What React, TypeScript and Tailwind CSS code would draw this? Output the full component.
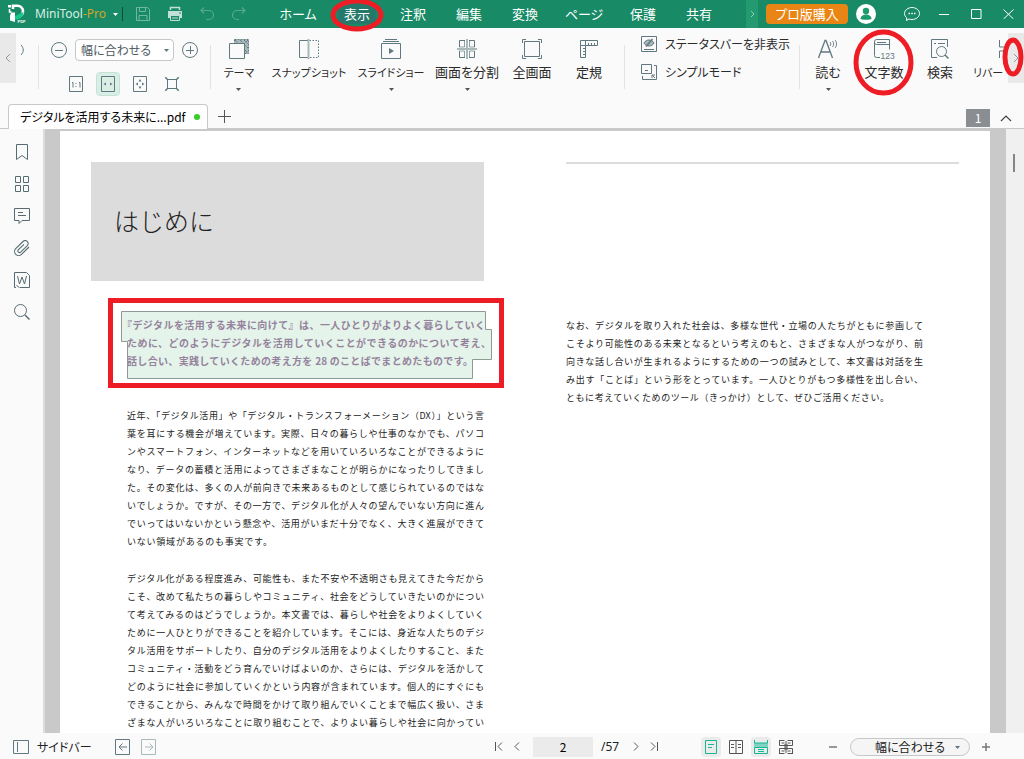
import type { ReactNode } from 'react'

const MENUS = [
  { label: 'ホーム', wide: true },
  { label: '表示', active: true },
  { label: '注釈' },
  { label: '編集' },
  { label: '変換' },
  { label: 'ページ', wide: true },
  { label: '保護' },
  { label: '共有' },
]

const LEFT_FIRST = [
  '近年、「デジタル活用」や「デジタル・トランスフォーメーション（DX）」という言',
  '葉を耳にする機会が増えています。実際、日々の暮らしや仕事のなかでも、パソコ',
  'ンやスマートフォン、インターネットなどを用いていろいろなことができるように',
  'なり、データの蓄積と活用によってさまざまなことが明らかになったりしてきまし',
  'た。その変化は、多くの人が前向きで未来あるものとして感じられているのではな',
  'いでしょうか。ですが、その一方で、デジタル化が人々の望んでいない方向に進ん',
  'でいってはいないかという懸念や、活用がいまだ十分でなく、大きく進展ができて',
  'いない領域があるのも事実です。',
]

const LEFT_SECOND = [
  'デジタル化がある程度進み、可能性も、また不安や不透明さも見えてきた今だから',
  'こそ、改めて私たちの暮らしやコミュニティ、社会をどうしていきたいのかについ',
  'て考えてみるのはどうでしょうか。本文書では、暮らしや社会をよりよくしていく',
  'ために一人ひとりができることを紹介しています。そこには、身近な人たちのデジ',
  'タル活用をサポートしたり、自分のデジタル活用をよりよくしたりすること、また',
  'コミュニティ・活動をどう育んでいけばよいのか、さらには、デジタルを活かして',
  'どのように社会に参加していくかという内容が含まれています。個人的にすぐにも',
  'できることから、みんなで時間をかけて取り組んでいくことまで幅広く扱い、さま',
  'ざまな人がいろいろなことに取り組むことで、よりよい暮らしや社会に向かってい',
]

const RIGHT_TEXT = [
  'なお、デジタルを取り入れた社会は、多様な世代・立場の人たちがともに参画して',
  'こそより可能性のある未来となるという考えのもと、さまざまな人がつながり、前',
  '向きな話し合いが生まれるようにするための一つの試みとして、本文書は対話を生',
  'み出す「ことば」という形をとっています。一人ひとりがもつ多様性を出し合い、',
  'ともに考えていくためのツール（きっかけ）として、ぜひご活用ください。',
]

function Svg({ w, h, children, className = '' }: { w: number; h: number; children: ReactNode; className?: string }) {
  return (
    <svg width={w} height={h} viewBox={`0 0 ${w} ${h}`} fill="none" stroke="currentColor" className={`shrink-0 ${className}`} aria-hidden="true">
      {children}
    </svg>
  )
}

function Caret({ className = '' }: { className?: string }) {
  return (
    <Svg w={5} h={3} className={className}>
      <path d="M0 0h5L2.500 3z" fill="currentColor" stroke="none" />
    </Svg>
  )
}

// hand-drawn style marker ring, laid over the control it wraps
function Ring({ className, w, h }: { className: string; w: number; h: number }) {
  return (
    <svg width={w} height={h} className={`absolute z-20 pointer-events-none ${className}`} aria-hidden="true">
      <ellipse cx={w / 2} cy={h / 2} rx={w / 2 - 3} ry={h / 2 - 3} fill="none" stroke="#ee1c25" strokeWidth="5" />
    </svg>
  )
}

function TitleBar() {
  return (
    <header className="h-7 shrink-0 flex items-center bg-[#188a65] text-white">
      <div className="w-[267px] shrink-0 flex items-center pl-2">
        <svg width="20" height="20" viewBox="0 0 20 20" aria-label="MiniTool PDF" role="img">
          <path d="M0 1h3v2.500H0z" fill="#fff" />
          <path d="M1.500 5v3h2" fill="none" stroke="#fff" strokeWidth="1.500" />
          <path d="M5 5V1.800h4.500a5.500 5.500 0 0 1 5.500 5.500c0 2-1 3.500-2.500 4.500" fill="none" stroke="#fff" strokeWidth="2.600" />
          <path d="M3 8.500h4V18l-5-1.500V12z" fill="#fff" />
          <path d="M7 12l8.500-4c0 5-3.500 7.500-8.500 7.500z" fill="#16c98a" />
          <text x="9.500" y="19" fontSize="4" fontWeight="700" fill="#fff" fontFamily="Liberation Sans, sans-serif">PDF</text>
        </svg>
        <span className="ml-[7px] w-[68px] text-[12px] leading-4 whitespace-nowrap font-['Noto_Sans',sans-serif] text-[#d9efe7]">
          MiniTool<span className="text-[#d5a528]">-Pro</span>
        </span>
        <button aria-label="アプリメニュー" className="ml-2.5"><Caret /></button>
        <span className="ml-1 w-px h-3.5 bg-[#0c4a36]" />
        <button aria-label="保存" className="ml-3 text-[#6fb8a1]">
          <Svg w={16} h={16}>
            <path d="M1.500 1.500h11l2 2v11h-13zM4.500 1.500v4h6v-4M4 14.500v-5h8v5" />
          </Svg>
        </button>
        <button aria-label="印刷" className="ml-4 text-[#c3e0d6]">
          <Svg w={16} h={16}>
            <path d="M3.500 4V1.500h9V4" strokeWidth="1.500" />
            <path d="M1 5h14v7H1z" fill="currentColor" stroke="none" />
            <path d="M3.500 9.500h9v5h-9z" fill="#188a65" />
            <path d="M5 12h6" />
            <path d="M12 7h2" stroke="#188a65" />
          </Svg>
        </button>
        <button aria-label="元に戻す" className="ml-4 text-[#57a88e]">
          <Svg w={16} h={16}>
            <path d="M5 1.500L2 4.500l3 3M2 4.500h8a4.500 4.500 0 0 1 0 9H7" strokeWidth="1.200" />
          </Svg>
        </button>
        <button aria-label="やり直す" className="ml-4 text-[#57a88e]">
          <Svg w={16} h={16}>
            <path d="M11 1.500l3 3-3 3M14 4.500H6a4.500 4.500 0 0 0 0 9h2" strokeWidth="1.200" />
          </Svg>
        </button>
      </div>
      <nav className="flex items-center flex-1">
        {MENUS.map(m => (
          <div key={m.label} className={`relative flex justify-center ${m.wide ? 'w-[62px]' : 'w-14'}`}>
            <button className={`h-5 px-1.5 text-[13px] leading-5 whitespace-nowrap ${m.active ? 'bg-[#26786a]' : ''}`}>
              {m.label}
            </button>
            {m.active && <Ring w={54} h={34} className="left-px -top-1.5" />}
          </div>
        ))}
      </nav>
      <div className="flex items-center h-full pr-2.5">
        <button aria-label="次のメニュー" className="w-3 h-full flex items-center justify-center bg-[#239a70] text-[#8fd0b6]">
          <Svg w={5} h={8}><path d="M1 1l3 3-3 3" /></Svg>
        </button>
        <button className="ml-2 h-5 w-[82px] rounded bg-[#e98514] text-[13px] leading-5 whitespace-nowrap">プロ版購入</button>
        <button aria-label="アカウント" className="ml-2">
          <Svg w={20} h={20}>
            <circle cx="10" cy="10" r="10" fill="#fff" stroke="none" />
            <circle cx="10" cy="7" r="3.200" fill="#1c9c6d" stroke="none" />
            <path d="M4.500 15c0-6 11-6 11 0 0 1-11 1-11 0z" fill="#1c9c6d" stroke="none" />
          </Svg>
        </button>
        <button aria-label="フィードバック" className="ml-7">
          <Svg w={16} h={16}>
            <path d="M8 1.500c4 0 7.500 2.700 7.500 6s-3.500 6-7.500 6c-1 0-2-.1-3-.5L2.500 14.500l.2-2.700C1.300 10.700.5 9.200.5 7.500c0-3.300 3.500-6 7.500-6z" />
            <path d="M4.500 7.500h1.500M7.300 7.500h1.500M10 7.500h1.500" strokeWidth="1.500" />
          </Svg>
        </button>
        <button aria-label="最小化" className="ml-[19px]"><Svg w={10} h={10}><path d="M0 5.500h10" /></Svg></button>
        <button aria-label="最大化" className="ml-[22px]"><Svg w={11} h={10}><path d="M.5.500h9.500v9H.5z" /></Svg></button>
        <button aria-label="閉じる" className="ml-[21px]"><Svg w={11} h={10}><path d="M.5.500l10 9.500M10.500.500l-10 9.500" /></Svg></button>
      </div>
    </header>
  )
}

function Separator() {
  return <span className="w-px h-11 mt-[17px] shrink-0 bg-[#e2e4e4]" />
}

type ToolProps = {
  label: string
  width: string
  icon: ReactNode
  small?: boolean
  caret?: boolean
  children?: ReactNode
}

function Tool({ label, width, icon, small, caret, children }: ToolProps) {
  return (
    <div className={`relative shrink-0 flex justify-center ${width}`}>
      <button className="flex flex-col items-center pt-2.5 text-[#607880]">
        {icon}
        <span className={`mt-1 leading-4 whitespace-nowrap text-[#2b2b2b] ${small ? 'text-[11px]' : 'text-[13px]'}`}>{label}</span>
        {caret && <Caret className="mt-2 text-[#555]" />}
      </button>
      {children}
    </div>
  )
}

function Ribbon() {
  return (
    <div className="h-[76px] shrink-0 flex items-start bg-[#fafafa] text-[#607880] overflow-hidden">
      <button aria-label="前へスクロール" className="w-4 h-[50px] mt-[5px] shrink-0 flex items-center justify-center bg-[#e9e9e9] text-[#8a9a98]">
        <Svg w={6} h={10}><path d="M5 1L1 5l4 4" /></Svg>
      </button>
      <Svg w={5} h={12} className="ml-1 mt-4 text-[#607880]"><path d="M1 1c3 3 3 7 0 10" /></Svg>
      <span className="w-[13px] shrink-0" />
      <Separator />
      <div className="w-[171px] shrink-0 pl-3 pt-[11px]">
        <div className="flex items-center gap-2">
          <button aria-label="縮小">
            <Svg w={16} h={22}><circle cx="8" cy="11" r="7.500" /><path d="M4 11.500h8" /></Svg>
          </button>
          <div className="relative">
            <select aria-label="表示倍率" className="block appearance-none w-[99px] h-[22px] pl-[5px] border border-[#c4c8c8] rounded bg-white text-[12px] leading-5 text-[#4d5a5e]">
              <option>幅に合わせる</option>
            </select>
            <Caret className="absolute right-[5px] top-2.5 pointer-events-none" />
          </div>
          <button aria-label="拡大">
            <Svg w={16} h={22}><circle cx="8" cy="11" r="7.500" /><path d="M4 11.500h8M8.500 7v8" /></Svg>
          </button>
        </div>
        <div className="flex gap-2 mt-[11px] pl-[13px]">
          <button aria-label="実際のサイズ" className="w-6 h-6 flex items-center justify-center">
            <Svg w={14} h={16}><path d="M.5.500h13v15H.5zM3 6.500h1v5M10 6.500h1v5M7 7v1M7 10v1" /></Svg>
          </button>
          <button aria-label="幅に合わせる" className="w-6 h-6 flex items-center justify-center rounded-sm border border-[#c3e3d4] bg-[#daeee5]">
            <Svg w={14} h={16}>
              <path d="M.5.500h13v15H.5z" />
              <path d="M2.500 8l2.500-1.500v3zM11.500 8L9 6.500v3z" fill="currentColor" stroke="none" />
            </Svg>
          </button>
          <button aria-label="ページに合わせる" className="w-6 h-6 flex items-center justify-center">
            <Svg w={14} h={16}>
              <path d="M.5.500h13v15H.5z" />
              <path d="M2.500 8L5 6.500v3zM11.500 8L9 6.500v3zM7 3l1.500 2.500h-3zM7 13l1.500-2.500h-3z" fill="currentColor" stroke="none" />
            </Svg>
          </button>
          <button aria-label="選択範囲に合わせる" className="w-6 h-6 flex items-center justify-center">
            <Svg w={14} h={14}><path d="M2.500 2.500h9v9h-9z" /><path d="M0 0l3 3M14 0l-3 3M0 14l3-3M14 14l-3-3" strokeWidth="1.500" /></Svg>
          </button>
        </div>
      </div>
      <Separator />

      <Tool
        label="テーマ"
        width="w-14"
        small
        caret
        icon={
          <Svg w={22} h={22}>
            <path d="M6.500 1.500h14v14h-14z" fill="#a9b8bb" strokeDasharray="2 1" />
            <path d="M7 2l13 13M12 2l8 8M16 2l4 4M20 2l-6 6" stroke="#4d656b" strokeDasharray="1 1" />
            <path d="M1.500 5.500h15v15h-15z" fill="#fafafa" />
          </Svg>
        }
      />
      <Tool
        label="スナップショット"
        width="w-[84px]"
        small
        icon={
          <Svg w={22} h={22}>
            <path d="M10 2.500H1.500v17H10" />
            <path d="M11.500 2.500h9v17h-9" strokeDasharray="1.500 1.500" />
            <path d="M10.500 1v20" stroke="#a9b9b9" strokeWidth="2" />
          </Svg>
        }
      />
      <Tool
        label="スライドショー"
        width="w-20"
        small
        caret
        icon={
          <Svg w={22} h={22}>
            <path d="M5 1.500h12M3 3.500h16M1.500 5.500h19v15h-19z" />
            <path d="M9 10l5 3-5 3z" fill="currentColor" stroke="none" />
          </Svg>
        }
      />
      <Tool
        label="画面を分割"
        width="w-[72px]"
        caret
        icon={
          <Svg w={22} h={22}>
            <path d="M3.500 2.500h15v17h-15z" />
            <path d="M11 1v20M1 11h20" stroke="#fafafa" strokeWidth="4" />
            <path d="M11 1v20M1 11h20" stroke="#a9b9b9" strokeWidth="2" />
            <path d="M8.500 2.500v6.500h-5M13.500 2.500v6.500h5M8.500 19.500v-6.500h-5M13.500 19.500v-6.500h5" strokeWidth=".7" />
          </Svg>
        }
      />
      <Tool
        label="全画面"
        width="w-[58px]"
        icon={
          <Svg w={22} h={22}>
            <path d="M3.500 3.500h15v15h-15zM1.500 5V1.500H5M17 1.500h3.500V5M20.500 17v3.500H17M5 20.500H1.500V17" />
          </Svg>
        }
      />
      <Tool
        label="定規"
        width="w-14"
        icon={
          <Svg w={22} h={22}>
            <path d="M2.500 2.500h17v5h-12v12h-5zM2.500 7.500h5V3M10.500 5v2M13.500 5v2M16.500 5v2M5 10.500h2M5 13.500h2M5 16.500h2" />
          </Svg>
        }
      />
      <span className="w-[7px] shrink-0" />
      <Separator />

      <div className="flex-1 pl-4 pt-2 flex flex-col items-start gap-3 text-[12px] leading-4 text-[#2b2b2b]">
        <button className="flex items-center gap-2 whitespace-nowrap">
          <Svg w={16} h={16} className="text-[#607880]">
            <path d="M.5.500h15v15H.5zM3 13.500h10" />
            <path d="M3 7c2-4 8-4 10 0-2 4-8 4-10 0z" fill="#a9b8b8" />
            <path d="M5 10.500L11.500 3" strokeWidth="1.500" />
          </Svg>
          ステータスバーを非表示
        </button>
        <button className="flex items-center gap-2 whitespace-nowrap">
          <Svg w={16} h={16} className="text-[#607880]">
            <path d="M.5.500h10v9H.5zM4 6.500h3M13 1.500h2.500V15.500H1.500V12M14 11l-3 0v3M11 11l3 3" />
          </Svg>
          シンプルモード
        </button>
      </div>
      <Separator />

      <Tool
        label="読む"
        width="w-14"
        caret
        icon={
          <Svg w={22} h={22}>
            <path d="M1.500 20L8 2.500h1L15.500 20M4 14h9" strokeWidth="1.300" />
            <path d="M13 4c1 1 1 3 0 4M15.500 3c1.500 2 1.500 4 0 6M18 2c2 2 2 6 0 8" strokeWidth=".9" />
          </Svg>
        }
      />
      <Tool
        label="文字数"
        width="w-14"
        icon={
          <Svg w={22} h={22}>
            <path d="M7 19.500H3.500a2 2 0 0 1-2-2V3.500a2 2 0 0 1 2-2h13v10M1.500 4.500a2 2 0 0 0 2 2h13M4 4.500h9" />
            <text x="7.500" y="21" fontSize="8.500" fill="currentColor" stroke="none" fontFamily="Liberation Sans, sans-serif">123</text>
          </Svg>
        }
      >
        <Ring w={61} h={67} className="-left-[3px] top-px" />
      </Tool>
      <Tool
        label="検索"
        width="w-14"
        icon={
          <Svg w={22} h={22}>
            <path d="M8 19.500H2.500v-18h16V9M5 5.500h2M9 5.500h7" />
            <circle cx="12.500" cy="13.500" r="5" />
            <path d="M16 17l3.500 3.500" strokeWidth="1.500" />
          </Svg>
        }
      />
      <div className="w-10 pl-[5px] shrink-0 overflow-hidden">
        <button className="flex flex-col items-start pt-2.5">
          <Svg w={34} h={22} className="text-[#607880]"><path d="M26.500 2v7H33M26.500 20v-7H33" /></Svg>
          <span className="mt-1 text-[11px] leading-4 whitespace-nowrap text-[#2b2b2b]">リバー</span>
        </button>
      </div>
      <div className="relative shrink-0 mt-[5px]">
        <button aria-label="次へスクロール" className="w-4 h-[50px] flex items-center justify-center bg-[#e9e9e9] text-[#8a9a98]">
          <Svg w={6} h={10}><path d="M1 1l4 4-4 4" /></Svg>
        </button>
        <Ring w={22} h={40} className="-left-1.5 top-1" />
      </div>
    </div>
  )
}

function TabRow() {
  return (
    <div className="h-[25px] shrink-0 flex items-center bg-[#fafafa] border-b border-[#c9c9c9] pr-3">
      <div className="ml-2 w-[200px] h-[25px] flex items-center pl-[11px] pr-[7px] rounded-t bg-white border border-b-0 border-[#c9c9c9]">
        <button className="text-[12px] leading-5 whitespace-nowrap text-black">デジタルを活用する未来に...pdf</button>
        <span className="ml-auto w-1.5 h-1.5 shrink-0 rounded-full bg-[#35cf25]" />
      </div>
      <button aria-label="新しいタブ" className="ml-2.5 text-[#555]">
        <Svg w={13} h={13}><path d="M0 6.500h13M6.500 0v13" /></Svg>
      </button>
      <span className="ml-auto w-6 h-[18px] mt-1 bg-[#8a8e92] text-white text-[12px] leading-[18px] text-center">1</span>
      <button aria-label="リボンを折りたたむ" className="ml-2.5 mt-1 text-[#444]">
        <Svg w={12} h={8}><path d="M1 7l5-5 5 5" strokeWidth="1.200" /></Svg>
      </button>
    </div>
  )
}

function SideBar() {
  return (
    <aside className="w-[45px] shrink-0 pt-[15px] flex flex-col items-center gap-4 bg-[#fafafa] border-r-2 border-[#dcdcdc] text-[#566b72]">
      <button aria-label="ブックマーク">
        <Svg w={16} h={16}><path d="M2.500.500h11v15L8 11.500l-5.500 4z" /></Svg>
      </button>
      <button aria-label="サムネイル">
        <Svg w={16} h={16}><path d="M1.500.500h5v6h-5zM9.500.500h5v6h-5zM1.500 9.500h5v6h-5zM9.500 9.500h5v6h-5z" /></Svg>
      </button>
      <button aria-label="コメント">
        <Svg w={16} h={16}><path d="M.5.500h15v12H8l-3 3v-3H.5zM4 4.500h5M4 7.500h8" /></Svg>
      </button>
      <button aria-label="添付ファイル">
        <Svg w={16} h={16}>
          <path d="M15 7l-7.500 7.300a4 4 0 0 1-5.800-5.600L9 1.500a3 3 0 0 1 4.300 4.200L6.500 12.300a1.700 1.700 0 0 1-2.300-2.400L10 4.300" strokeWidth="1.100" />
        </Svg>
      </button>
      <button aria-label="Word">
        <Svg w={16} h={16}>
          <path d="M2 15.500H.5V.5h12l3 3v12H6M2.500 13.500l3 2" />
          <path d="M3.500 4l2 8L8 5l2.500 7 2-8" />
        </Svg>
      </button>
      <button aria-label="検索">
        <Svg w={16} h={16}><circle cx="6.500" cy="6.500" r="6" /><path d="M11 11l4.500 4.500" strokeWidth="1.500" /></Svg>
      </button>
    </aside>
  )
}

// every line is set flush to the measure, the closing one to its own shorter width
function Paragraph({ lines, className, lastWidth = '' }: { lines: string[]; className: string; lastWidth?: string }) {
  return (
    <p className={`w-[357px] text-[9px] leading-[18px] text-[#222] whitespace-nowrap [font-feature-settings:normal] [text-align-last:justify] ${className}`}>
      {lines.map((line, i) => (
        <span key={line} className={`block ${i === lines.length - 1 ? lastWidth : ''}`}>
          {line}
        </span>
      ))}
    </p>
  )
}

function DocumentView() {
  return (
    <main className="flex-1 min-w-0 flex bg-[#c9c9c9] overflow-hidden">
      <article className="flex-1 min-w-0 ml-[15px] mr-4 mt-0.5 px-[31px] pt-[31px] flex gap-[82px] bg-white">
        <section className="flex-1 min-w-0">
          <div className="h-[119px] pl-[23px] pb-1 flex items-center bg-[#dcdcdc]">
            <h1 className="text-[25px] leading-9 font-light text-[#222] [font-feature-settings:normal]">はじめに</h1>
          </div>
          <div className="relative mt-[17px] ml-[17px] w-[396px] py-[13px] pl-3.5 border-[5px] border-[#ee1c25] [font-feature-settings:normal]">
            <svg className="absolute left-2 top-2" width="372" height="69" aria-hidden="true">
              <path d="M.5.500h364v18h6v30h-19v19h-345v-37h-6z" fill="#e5f4ea" stroke="#8f9a93" />
            </svg>
            <p className="relative w-[364px] text-[10px] leading-[18px] font-bold text-[#95839d] whitespace-nowrap [text-align-last:justify]">
              <span className="block -ml-[5px] w-[363px]">『デジタルを活用する未来に向けて』は、一人ひとりがよりよく暮らしていく</span>
              <span className="block">ために、どのようにデジタルを活用していくことができるのかについて考え、</span>
              <span className="block w-[346px]">話し合い、実践していくための考え方を 28 のことばでまとめたものです。</span>
            </p>
          </div>
          <Paragraph lines={LEFT_FIRST} className="mt-[19px] ml-9" lastWidth="w-[145px]" />
          <Paragraph lines={LEFT_SECOND} className="mt-[19px] ml-9" />
        </section>
        <section className="flex-1 min-w-0">
          <hr className="border-t-2 border-[#dcdcdc]" />
          <Paragraph lines={RIGHT_TEXT} className="mt-[153px]" lastWidth="w-[323px]" />
        </section>
      </article>
      <div className="w-[18px] shrink-0 pt-[25px] pl-[7px] bg-[#f0f0f0]">
        <div className="w-0.5 h-[18px] bg-[#858585]" />
      </div>
    </main>
  )
}

function StatusBar() {
  return (
    <footer className="h-[26px] shrink-0 flex items-center pt-px bg-[#fafafa] text-[#607880] text-[12px] leading-5">
      <button className="ml-[13px] w-[75px] flex items-center gap-2">
        <Svg w={16} h={14}><path d="M.5.500h15v13H.5zM4.500 2v10" /></Svg>
        <span className="text-[#222] whitespace-nowrap">サイドバー</span>
      </button>
      <div className="ml-[27px] flex gap-2.5">
        <button aria-label="戻る"><Svg w={16} h={16}><path d="M.5.500h14v15H.5zM4 8h8M7.500 4.500L4 8l3.500 3.500" /></Svg></button>
        <button aria-label="進む" className="text-[#a9b9b9]"><Svg w={16} h={16}><path d="M.5.500h14v15H.5zM4 8h8M8.500 4.500L12 8l-3.500 3.500" /></Svg></button>
      </div>
      <div className="ml-auto mr-[43px] flex items-center text-[#555]">
        <button aria-label="最初のページ"><Svg w={8} h={9}><path d="M.5 0v9M7 .500l-4 4 4 4" /></Svg></button>
        <button aria-label="前のページ" className="ml-[11px]"><Svg w={6} h={9}><path d="M5 .500l-4 4 4 4" /></Svg></button>
        <input aria-label="ページ番号" defaultValue="2" className="ml-[13px] w-[60px] h-5 bg-[#ebebeb] text-center text-black" />
        <span className="ml-2 w-6 font-['Noto_Sans',sans-serif] text-[#222]">/57</span>
        <button aria-label="次のページ" className="ml-2"><Svg w={6} h={9}><path d="M1 .500l4 4-4 4" /></Svg></button>
        <button aria-label="最後のページ" className="ml-[11px]"><Svg w={8} h={9}><path d="M7.500 0v9M1 .500l4 4-4 4" /></Svg></button>
      </div>
      <div className="flex items-center gap-[5px] text-[#555]">
        <button aria-label="単一ページ" className="w-5 h-5 flex items-center justify-center rounded-sm bg-[#ebebeb] text-[#14b893]">
          <Svg w={12} h={14}><path d="M.5.500h11v13H.5zM3 4.500h6M3 7.500h4" /></Svg>
        </button>
        <button aria-label="見開き" className="w-5 h-5 flex items-center justify-center">
          <Svg w={14} h={14}><path d="M.5.500h13v13H.5zM7 .500v13M2 4.500h3M2 7.500h3M9 4.500h3M9 7.500h3" /></Svg>
        </button>
        <button aria-label="連続" className="w-5 h-5 flex items-center justify-center rounded-sm bg-[#ebebeb] text-[#14b893]">
          <Svg w={14} h={14}>
            <path d="M0 3h14v4H0z" fill="#7fd3c0" stroke="none" />
            <path d="M.5 0v3h13V0M.5 13.500v-6h13v6zM4 9.500h6M4 11.500h6" />
          </Svg>
        </button>
        <button aria-label="見開き連続" className="w-5 h-5 flex items-center justify-center">
          <Svg w={14} h={14}>
            <path d="M5 4h4v6H5z" fill="#a5a5a5" stroke="none" />
            <path d="M.5 0v5.500h13V0M0 .500h5.500M8.500.500H14M.5 14V8.500h13V14M0 13.500h5.500M8.500 13.500H14M7 1v12M2.500 3h3M8.500 3h3M2.500 11h3M8.500 11h3" />
          </Svg>
        </button>
      </div>
      <button aria-label="縮小" className="ml-[33px] text-[#777]"><Svg w={8} h={8}><path d="M0 4h8" strokeWidth="1.500" /></Svg></button>
      <div className="relative ml-[13px]">
        <select aria-label="ズーム" className="block appearance-none w-[120px] h-[18px] pl-6 border border-[#c4c8c8] rounded-full bg-[#f5f5f5] text-[12px] leading-4 text-[#222]">
          <option>幅に合わせる</option>
        </select>
        <Caret className="absolute right-2.5 top-2 pointer-events-none" />
      </div>
      <button aria-label="拡大" className="ml-3 mr-[34px] text-[#777]"><Svg w={8} h={8}><path d="M0 4h8M4 0v8" strokeWidth="1.500" /></Svg></button>
    </footer>
  )
}

export default function App() {
  return (
    <div lang="ja" className="h-screen flex flex-col overflow-hidden bg-[#fafafa] font-['Noto_Sans_CJK_JP',sans-serif] [font-feature-settings:'palt']">
      <TitleBar />
      <Ribbon />
      <TabRow />
      <div className="flex-1 min-h-0 flex">
        <SideBar />
        <DocumentView />
      </div>
      <StatusBar />
    </div>
  )
}
